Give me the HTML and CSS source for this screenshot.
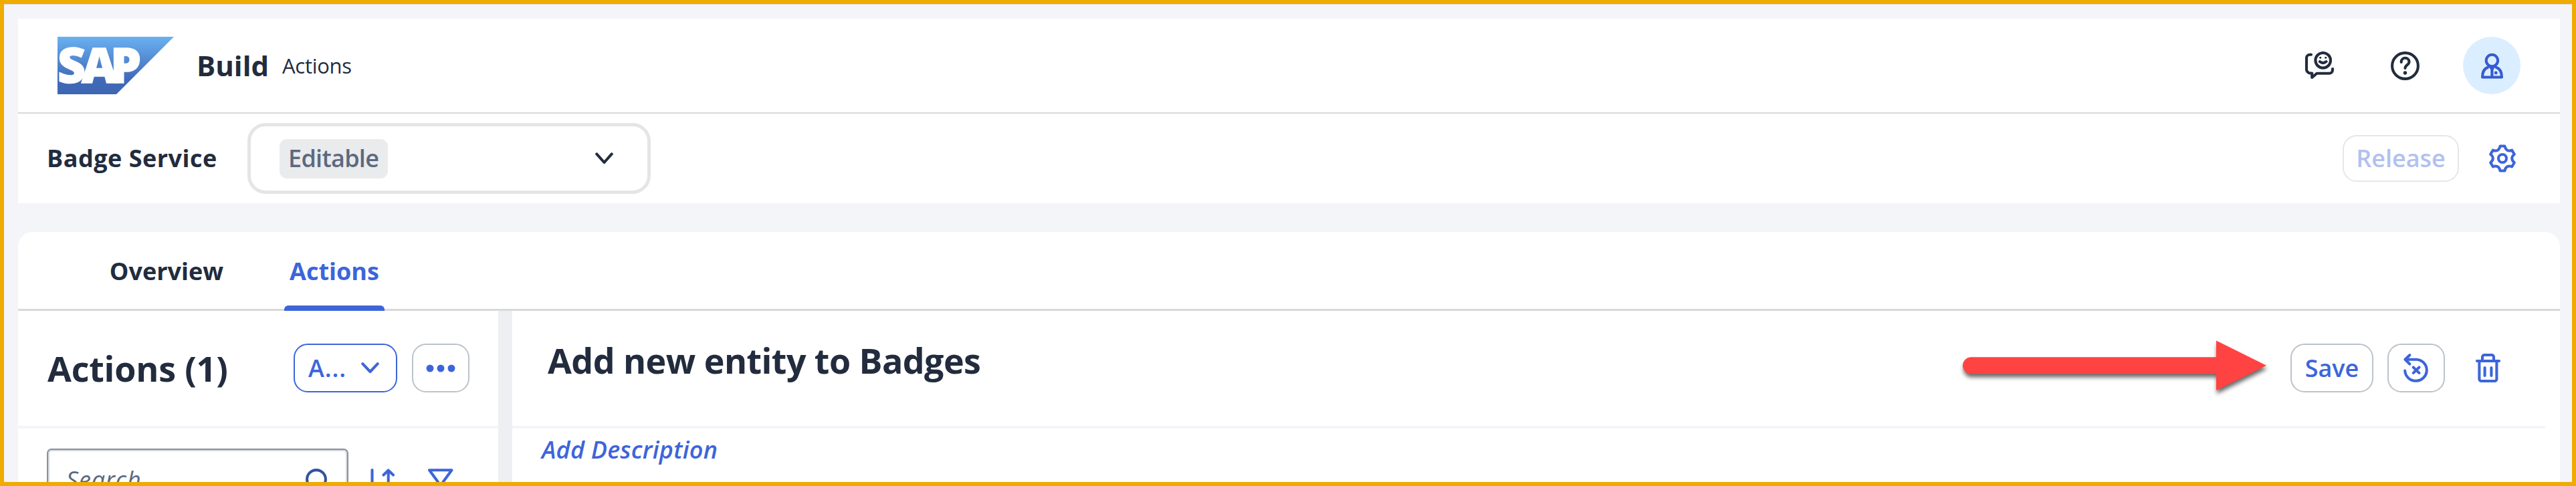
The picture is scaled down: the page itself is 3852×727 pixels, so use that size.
FILE: index.html
```
<!DOCTYPE html>
<html lang="en">
<head>
<meta charset="utf-8">
<title>SAP Build Actions</title>
<link rel="stylesheet" href="styles.css">
</head>
<body>
<div class="frame">
  <header class="shell">
    <div class="shell-bar">
      <svg class="logo" width="174" height="86" viewBox="0 0 174 86">
        <defs><linearGradient id="sapBlue" x1="0" y1="0" x2="0" y2="1"><stop offset="0" stop-color="#69b1f1"/><stop offset=".75" stop-color="#4069b8"/><stop offset="1" stop-color="#3d66b2"/></linearGradient></defs>
        <path d="M0 0H174L88 86H0Z" fill="url(#sapBlue)"/>
        <text class="logo-text" y="69"><tspan x="0">S</tspan><tspan x="36">A</tspan><tspan x="79">P</tspan></text>
      </svg>
      <span class="t product">Build</span>
      <span class="t app">Actions</span>
      <div class="shell-actions">
        <svg class="icon" width="43" height="43" viewBox="0 0 43 43">
          <path d="M9 4.7H7a5 5 0 0 0-5 5V26a6 6 0 0 0 6 6.5h2.2V39l7.300-6.300H36a5 5 0 0 0 5-5V26"/>
          <circle cx="26.700" cy="13.300" r="11.300"/>
          <path d="M21.800 15.200q4.900 3.800 9.800 0"/>
          <circle class="fill" cx="22.700" cy="9.200" r="1.500"/><circle class="fill" cx="30.700" cy="9.200" r="1.500"/>
        </svg>
        <svg class="icon help" width="43" height="43" viewBox="0 0 43 43">
          <circle cx="21.500" cy="21.500" r="19.400"/>
          <path d="M15.700 16v-.3a5.900 5.900 0 0 1 11.800 0c0 4.300-6 4.600-6 9.300"/>
          <circle class="fill" cx="21.500" cy="32" r="2.700"/>
        </svg>
        <div class="avatar">
          <svg class="icon" width="43" height="43" viewBox="0 0 43 43">
            <circle cx="21.400" cy="13.500" r="8.700"/>
            <path d="M15.500 23.500C10 25.500 7 31 7 38.500H36C36 31 33 25.500 27.300 23.500M21.400 25V38"/>
            <path class="fill" d="M15 20.500H28L21.400 30Z"/>
            <circle class="fill" cx="27.200" cy="32" r="2.400"/>
          </svg>
        </div>
      </div>
    </div>
    <div class="project-bar">
      <span class="t project">Badge Service</span>
      <div class="select">
        <span class="tag"><span class="t">Editable</span></span>
        <svg class="icon" width="27" height="18" viewBox="0 0 27 18"><path d="M2.300 2.300 13.500 15 24.700 2.300"/></svg>
      </div>
      <div class="project-actions">
        <button class="btn release"><span class="t">Release</span></button>
        <svg class="icon" width="42" height="42" viewBox="-21 -21 42 42">
          <path d="M-3.500-18.500H3.500C4.500-12.500 8.570-10.140 14.270-12.280L17.770-6.220C13.080-2.350 13.070 2.350 17.770 6.220L14.270 12.280C8.570 10.140 4.500 12.500 3.500 18.500H-3.500C-4.500 12.500-8.570 10.140-14.270 12.280L-17.770 6.220C-13.070 2.350-13.080-2.350-17.770-6.220L-14.270-12.280C-8.570-10.140-4.500-12.500-3.500-18.500Z"/>
          <circle r="6"/>
        </svg>
      </div>
    </div>
  </header>

  <main class="page">
    <nav class="tabs">
      <span class="tab"><span class="t">Overview</span></span>
      <span class="tab active"><span class="t">Actions</span></span>
    </nav>
    <div class="split">
      <aside class="list">
        <div class="list-head">
          <h2 class="t title">Actions (1)</h2>
          <button class="btn add"><span class="t">A...</span>
            <svg class="icon" width="27" height="17" viewBox="0 0 27 17"><path d="M2.300 2.200 13.500 14 24.700 2.200"/></svg>
          </button>
          <button class="btn more">
            <svg width="44" height="14" viewBox="0 0 44 14" fill="currentColor"><circle cx="6" cy="7" r="5.500"/><circle cx="22" cy="7" r="5.500"/><circle cx="38" cy="7" r="5.500"/></svg>
          </button>
        </div>
        <div class="list-tools">
          <div class="search">
            <span class="t">Search</span>
            <svg class="icon" width="42" height="42" viewBox="0 0 42 42"><circle cx="16" cy="18" r="13.900"/><path d="M26 28 38 40"/></svg>
          </div>
          <svg class="icon sort" width="37" height="43" viewBox="0 0 37 43"><path d="M2.500 2V40M26.700 40V2.500M19.500 9.500 26.700 2.500 34 9.500"/></svg>
          <svg class="icon" width="38" height="43" viewBox="0 0 38 43"><path d="M2 2.200H35.500L22.500 20V36L15 40V20Z"/></svg>
        </div>
      </aside>
      <section class="detail">
        <div class="detail-head">
          <h1 class="t title">Add new entity to Badges</h1>
          <div class="detail-actions">
            <svg class="arrow" width="454" height="76" viewBox="0 0 454 76"><path d="M12.500 25.300H379V.5L454 37.700 379 75V50.300H12.500a12.500 12.500 0 0 1 0-25Z"/></svg>
            <button class="btn save"><span class="t">Save</span></button>
            <button class="btn reset">
              <svg class="icon" width="38" height="43" viewBox="0 0 38 43"><path d="M9.300 2.200 2.500 8.700 9.300 15.500M3 8.700H19.200A16.300 16 0 1 1 2.200 25.500M14.800 20.500l8.600 8.400M23.400 20.500l-8.600 8.400"/></svg>
            </button>
            <svg class="icon trash" width="37" height="43" viewBox="0 0 37 43"><path d="M2 11H35M10 10V5a3 3 0 0 1 3-3H24a3 3 0 0 1 3 3V10M5.400 11V38a3 3 0 0 0 3 3H28.400a3 3 0 0 0 3-3V11M13.600 21V33M23.400 21V33"/></svg>
          </div>
        </div>
        <p class="t description">Add Description</p>
      </section>
    </div>
  </main>
</div>
</body>
</html>
```
FILE: styles.css
```
* { box-sizing: border-box; }

body {
  margin: 0;
  background: #f4f5f8;
  color: #222c3e;
  font: 36px "Open Sans", "Noto Sans", sans-serif;
}

h1, h2, p { margin: 0; }

.frame {
  display: flex;
  flex-direction: column;
  height: 727px;
  padding: 22px 18px 0 21px;
  border: 6px solid #f0ab00;
  overflow: hidden;
  box-shadow: inset 0 1px #dfe1e6;
}

.t { line-height: 1; white-space: nowrap; }

.icon {
  display: block;
  flex: none;
  fill: none;
  stroke: currentColor;
  stroke-width: 4.100;
  stroke-linecap: round;
  stroke-linejoin: round;
}
.icon .fill { fill: currentColor; stroke: none; }

.btn {
  display: flex;
  align-items: center;
  justify-content: center;
  flex: none;
  height: 73px;
  padding: 0;
  border: 2px solid #bcc3ca;
  border-radius: 21px;
  background: #fff;
  color: #3d65da;
  font: inherit;
  font-weight: 600;
}

/* Shell header */
.shell { flex: none; background: #fff; }

.shell-bar {
  display: flex;
  align-items: center;
  height: 142px;
  padding: 0 59px;
  border-bottom: 2px solid #d9d9d9;
}
.logo { flex: none; }
.logo-text { font: 800 73px "Open Sans", sans-serif; fill: #fff; stroke: #fff; stroke-width: 1.500; }
.product { margin-left: 34px; font-size: 42px; font-weight: 700; }
.app { margin-left: 20px; font-size: 31px; letter-spacing: -.3px; }
.shell-actions { display: flex; align-items: center; margin-left: auto; }
.help { margin: 0 65px 0 85px; }
.avatar {
  display: grid;
  place-items: center;
  width: 86px;
  height: 86px;
  border-radius: 50%;
  background: #dbeeff;
  color: #355bd1;
}

.project-bar {
  display: flex;
  align-items: center;
  height: 134px;
  padding: 0 65px 0 43px;
}
.project { width: 300px; font-weight: 700; letter-spacing: .5px; }
.select {
  display: flex;
  align-items: center;
  justify-content: space-between;
  width: 603px;
  height: 106px;
  padding: 0 51px 0 43px;
  border: 5px solid #e5e5e5;
  border-radius: 27px;
}
.tag {
  display: flex;
  align-items: center;
  width: 162px;
  height: 59px;
  padding-left: 13px;
  border-radius: 11px;
  background: #eaebed;
  color: #5b6980;
  font-weight: 600;
  letter-spacing: -.7px;
}
.project-actions { display: flex; align-items: center; gap: 44px; margin-left: auto; color: #3d65da; }
.release { width: 174px; height: 70px; border-color: #e5e6ea; color: #b1c1f0; }

/* Page */
.page {
  display: flex;
  flex: 1;
  flex-direction: column;
  min-height: 0;
  margin-top: 43px;
  border-radius: 22px 22px 0 0;
  background: #fff;
  overflow: hidden;
}
.tabs {
  display: flex;
  flex: none;
  gap: 84px;
  height: 118px;
  padding-left: 130px;
  box-shadow: inset 0 -3px #d9d9d9;
  font-weight: 700;
}
.tab {
  display: flex;
  align-items: center;
  justify-content: center;
  width: 184px;
}
.tab.active {
  color: #3d65da;
  width: 150px;
  position: relative;
}
.tab.active::after {
  content: "";
  position: absolute;
  inset: auto 0 0;
  height: 8px;
  border-radius: 6px 6px 0 0;
  background: #3d65da;
}

.split { display: flex; flex: 1; min-height: 0; }
.title { font-size: 52px; font-weight: 700; }

.list { width: 739px; flex: none; border-right: 21px solid #eeeff2; }
.list-head {
  display: flex;
  align-items: center;
  height: 176px;
  padding: 0 43px 1px 44px;
  border-bottom: 4px solid #f4f5f8;
}
.list-head .title { margin-right: auto; letter-spacing: -.2px; }
.add { width: 155px; padding-right: 5px; gap: 22px; border-color: #3d65da; }
.add .t { letter-spacing: .9px; }
.more { width: 86px; margin-left: 22px; }

.list-tools { display: flex; align-items: flex-start; padding: 30px 0 0 43px; color: #3d65da; }
.search {
  display: flex;
  align-items: center;
  justify-content: space-between;
  width: 451px;
  height: 98px;
  margin-right: 33px;
  padding: 0 20px 0 27px;
  border: 2px solid #8a909b;
  border-radius: 7px;
  box-shadow: inset 0 0 0 2px #d5d9df;
  color: #5b6980;
  font-style: italic;
  letter-spacing: .8px;
}
.search .t { padding-bottom: 4px; }
.search .icon { color: #33539f; }
.list-tools > .icon { margin-top: 30px; }
.list-tools > .sort { margin-right: 49px; }

.detail { flex: 1; min-width: 0; padding-right: 22px; }
.detail-head {
  display: flex;
  align-items: center;
  justify-content: space-between;
  height: 176px;
  padding: 0 67px 1px 53px;
  border-bottom: 4px solid #f4f5f8;
}
.detail-head .title { padding-bottom: 24px; letter-spacing: -.55px; }
.detail-actions { display: flex; align-items: center; color: #3d65da; }
.arrow { margin: -8px 36px 0 0; fill: #ff4343; overflow: visible; filter: drop-shadow(1px 5px 3px rgba(0, 0, 0, .6)); }
.save { width: 124px; margin-right: 21px; }
.reset { width: 86px; }
.trash { margin-left: 46px; }
.description { padding: 14px 0 0 44px; color: #3d65da; font-style: italic; font-weight: 600; letter-spacing: .2px; }
```
